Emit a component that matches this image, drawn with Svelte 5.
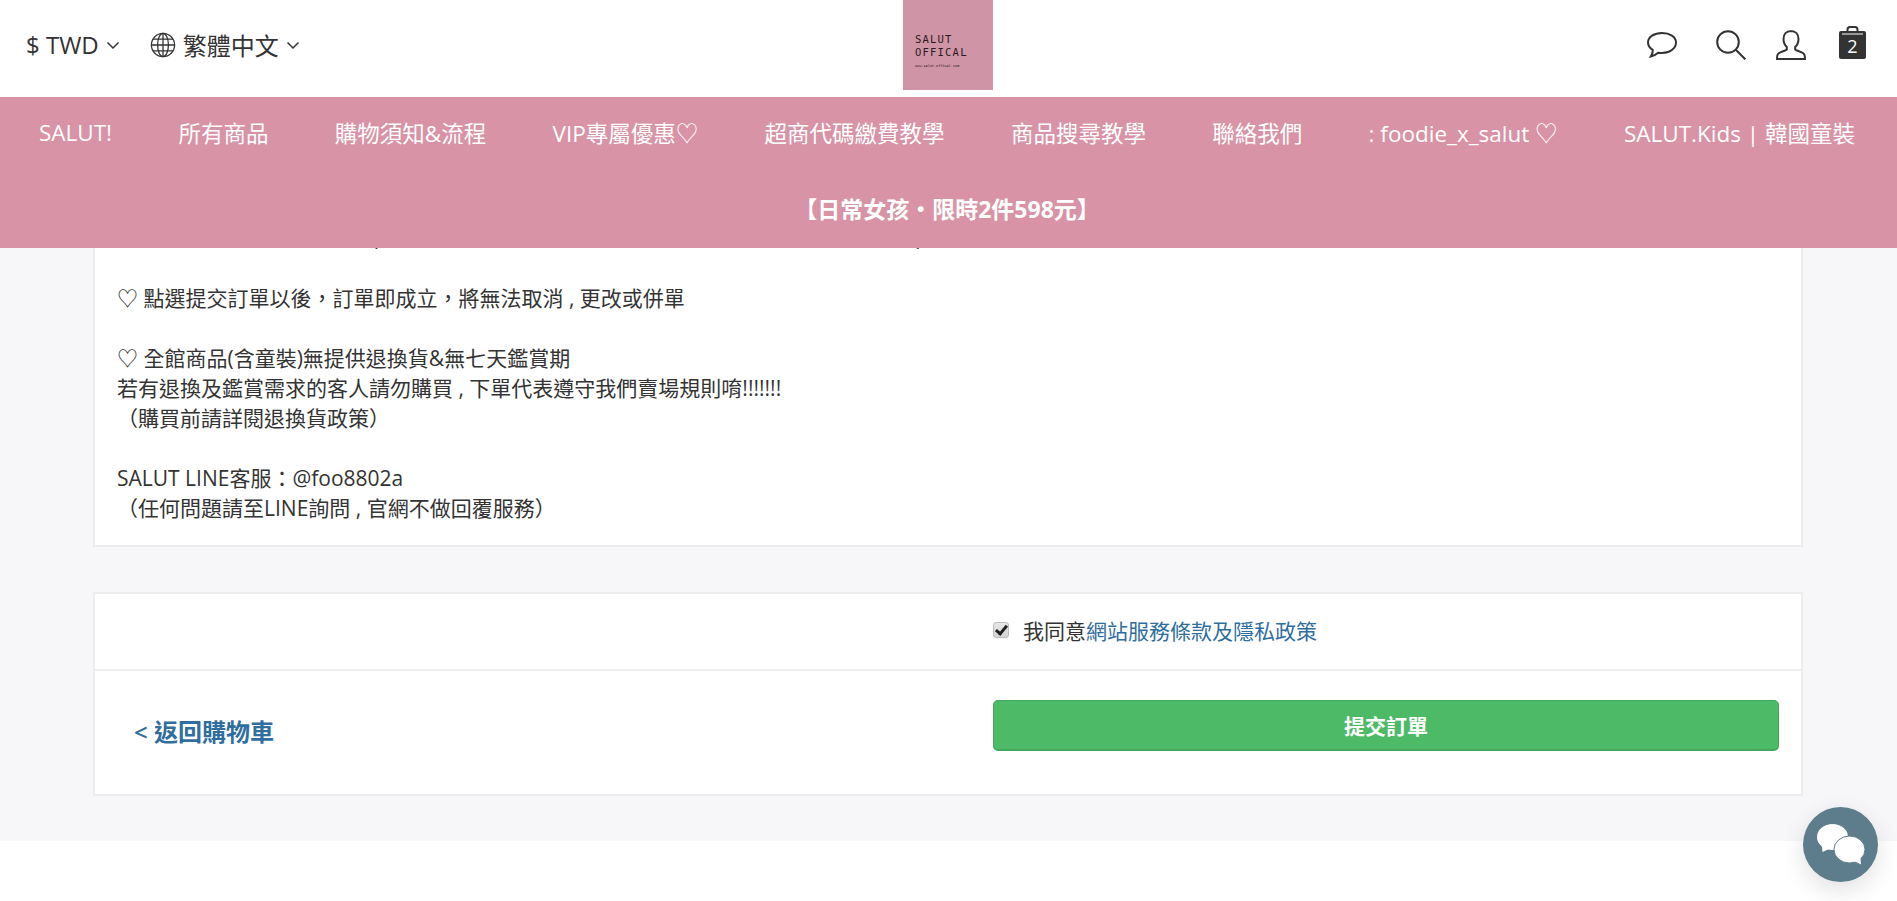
<script>
	const navItems = [
		'SALUT!',
		'所有商品',
		'購物須知&流程',
		'VIP專屬優惠♡',
		'超商代碼繳費教學',
		'商品搜尋教學',
		'聯絡我們',
		': foodie_x_salut ♡',
		'SALUT.Kids | 韓國童裝'
	];
</script>

<div class="page">
	<header class="site-header">
		<div class="topbar">
			<div class="topbar__left">
				<span class="picker">$ TWD
					<svg class="chev" viewBox="0 0 14 9"><path d="M1.5 1.5 7 7l5.5-5.5" /></svg>
				</span>
				<span class="picker">
					<svg class="globe" viewBox="0 0 26 26">
						<circle cx="13" cy="13" r="11.6" />
						<ellipse cx="13" cy="13" rx="5.4" ry="11.6" />
						<path d="M13 1.4v23.2M1.4 13h23.2M3 7.2h20M3 18.8h20" />
					</svg>
					繁體中文
					<svg class="chev" viewBox="0 0 14 9"><path d="M1.5 1.5 7 7l5.5-5.5" /></svg>
				</span>
			</div>
			<div class="logo">
				<span class="logo__name">SALUT<br />OFFICAL</span>
				<span class="logo__url">www.salut-offical.com</span>
			</div>
			<div class="topbar__right">
				<svg class="icon icon--chat" viewBox="0 0 30 26">
					<path d="M15 1C7.3 1 1 5 1 10.5c0 3 1.9 5.6 4.7 7.3.2 2.5-.6 4.9-1.9 6.7 2.800-.6 5.500-2 7.400-3.700 1.200.2 2.500.3 3.800.3 7.700 0 14-4.700 14-10.600S22.700 1 15 1Z" />
				</svg>
				<svg class="icon icon--search" viewBox="0 0 30 30">
					<circle cx="12" cy="12" r="10.8" />
					<path d="m19.8 19.8 9.6 9.6" />
				</svg>
				<svg class="icon icon--user" viewBox="0 0 30 30">
					<path d="M15 1c-4.600 0-7.500 3.300-7.500 8 0 3.400 1.300 6.100 3.300 8v2.500c-1.500 1.300-5.800 2.200-8.100 3.800C1.400 24.200 1 25.800 1 29h28c0-3.200-.4-4.800-1.700-5.700-2.300-1.600-6.600-2.500-8.100-3.800V17c2-1.900 3.300-4.600 3.300-8 0-4.700-2.900-8-7.500-8Z" />
				</svg>
				<svg class="cart" viewBox="0 0 27 33">
					<path class="cart__handle" d="M8.500 6V3.500C8.500 1.800 9.500 1 11 1h5c1.500 0 2.500.8 2.500 2.500V6" />
					<rect y="5" width="27" height="28" rx="2" />
					<path class="cart__line" d="M3 8h21" />
					<text x="13.500" y="27">2</text>
				</svg>
			</div>
		</div>
		<nav class="nav">
			<div class="nav__row">
				{#each navItems as item}
					<span>{item}</span>
				{/each}
			</div>
			<div class="nav__row nav__row--promo">
				<span>【日常女孩・限時2件598元】</span>
			</div>
		</nav>
	</header>

	<main class="content">
		<section class="panel panel--notes">
			<p class="notes__hidden"><span>(</span><span>)</span></p>
			<p>&nbsp;</p>
			<p>♡ 點選提交訂單以後，訂單即成立，將無法取消 , 更改或併單</p>
			<p>&nbsp;</p>
			<p>♡ 全館商品(含童裝)無提供退換貨&amp;無七天鑑賞期</p>
			<p>若有退換及鑑賞需求的客人請勿購買 , 下單代表遵守我們賣場規則唷!!!!!!!</p>
			<p>（購買前請詳閱退換貨政策）</p>
			<p>&nbsp;</p>
			<p>SALUT LINE客服：@foo8802a</p>
			<p>（任何問題請至LINE詢問 , 官網不做回覆服務）</p>
		</section>

		<section class="panel panel--submit">
			<div class="agree">
				<div class="agree__col">
					<input type="checkbox" checked />
					<span>我同意<a href="#terms">網站服務條款及隱私政策</a></span>
				</div>
			</div>
			<div class="actions">
				<a class="back" href="#cart">&lt; 返回購物車</a>
				<button class="submit" type="button">提交訂單</button>
			</div>
		</section>
	</main>

	<button class="chat" type="button" aria-label="chat">
		<svg viewBox="0 0 75 75">
			<ellipse cx="29.5" cy="30" rx="15.5" ry="13" />
			<path d="m19 39 .5 6 6.500-3Z" />
			<ellipse class="chat__front" cx="46.5" cy="42.5" rx="15.5" ry="13.5" />
			<path d="m51 54 7 3.500-.5-6.500Z" />
		</svg>
	</button>
</div>

<style>
	:global(body) {
		margin: 0;
		background: #fff;
		font-family: 'Open Sans', 'Noto Sans CJK TC', sans-serif;
		color: #333;
	}

	.page {
		position: relative;
		height: 901px;
		overflow: hidden;
	}

	.site-header {
		position: absolute;
		top: 0;
		left: 0;
		right: 0;
		z-index: 2;
	}

	.topbar {
		position: relative;
		display: flex;
		align-items: flex-start;
		justify-content: space-between;
		height: 97px;
		padding: 0 31px 0 26px;
		background: #fff;
	}

	.topbar__left {
		display: flex;
		align-items: center;
		gap: 30px;
		height: 89px;
		font-size: 24px;
		color: #333;
	}

	.picker {
		display: flex;
		align-items: center;
		gap: 7px;
	}

	.chev {
		width: 14px;
		height: 9px;
		margin-top: 2px;
		fill: none;
		stroke: #333;
		stroke-width: 1.5;
	}

	.globe {
		width: 26px;
		height: 26px;
		fill: none;
		stroke: #333;
		stroke-width: 1.3;
	}

	.logo {
		position: absolute;
		left: 903px;
		top: 0;
		width: 90px;
		height: 90px;
		box-sizing: border-box;
		padding: 33px 0 0 12px;
		background: #cf94a6;
		color: #2a1a20;
		font-family: 'DejaVu Sans Mono', monospace;
	}

	.logo__name {
		display: block;
		font-size: 10.5px;
		line-height: 12.5px;
		letter-spacing: 1.2px;
	}

	.logo__url {
		display: block;
		margin-top: 5px;
		font-size: 3.5px;
		line-height: 6px;
		white-space: nowrap;
	}

	.topbar__right {
		display: flex;
		align-items: center;
		height: 89px;
	}

	.icon {
		display: block;
		fill: none;
		stroke: #333;
		stroke-width: 2;
	}

	.icon--chat {
		width: 30px;
		height: 26px;
	}

	.icon--search {
		width: 30px;
		height: 30px;
		margin-left: 39px;
	}

	.icon--user {
		width: 30px;
		height: 30px;
		margin-left: 30px;
	}

	.cart {
		display: block;
		width: 27px;
		height: 33px;
		margin-left: 33px;
		margin-bottom: 4px;
		fill: #333;
	}

	.cart__handle {
		fill: none;
		stroke: #333;
		stroke-width: 2;
	}

	.cart__line {
		stroke: #fff;
		stroke-width: 1;
	}

	.cart text {
		fill: #fff;
		font-size: 18px;
		text-anchor: middle;
	}

	.nav {
		height: 151px;
		background: #d893a6;
		color: #fff;
		font-size: 22.5px;
	}

	.nav__row {
		display: flex;
		justify-content: space-between;
		align-items: center;
		height: 71px;
		padding: 0 42px 0 39px;
	}

	.nav__row--promo {
		justify-content: center;
		height: 80px;
		font-size: 23px;
		font-weight: 700;
	}

	.content {
		height: 596px;
		padding: 200px 93px 45px;
		background: #f7f7f9;
	}

	.panel {
		width: 1710px;
		box-sizing: border-box;
		background: #fff;
		border: 2px solid #ededed;
		border-top: 0;
	}

	.panel--notes {
		padding: 23px 22px 22px;
		font-size: 21px;
		line-height: 30px;
	}

	.panel--notes p {
		margin: 0;
	}

	/* the line scrolled under the nav, only its brackets still show */
	.notes__hidden {
		position: relative;
		height: 30px;
	}

	.notes__hidden span {
		position: absolute;
		left: 255px;
		top: 0;
	}

	.notes__hidden span + span {
		left: 799px;
	}

	.panel--submit {
		margin-top: 45px;
		border-top: 2px solid #ededed;
	}

	.agree {
		display: flex;
		align-items: center;
		height: 75px;
		border-bottom: 2px solid #ededed;
		font-size: 21px;
	}

	.agree__col {
		display: flex;
		align-items: center;
		gap: 14px;
		margin: 0 0 3px 898px;
	}

	.agree__col input {
		appearance: none;
		position: relative;
		width: 16px;
		height: 16px;
		margin: 0;
		box-sizing: border-box;
		background: linear-gradient(#e8e8e8, #d4d4d4);
		border: 1px solid #bdbdbd;
		border-radius: 3px;
	}

	.agree__col input::after {
		content: '';
		position: absolute;
		left: 4px;
		top: 0;
		width: 4px;
		height: 9px;
		border: solid #222;
		border-width: 0 3px 3px 0;
		transform: rotate(40deg);
	}

	a {
		color: #2f6e9e;
		text-decoration: none;
	}

	.actions {
		display: flex;
		align-items: flex-start;
		height: 123px;
	}

	.back {
		width: 859px;
		margin: 44px 0 0 39px;
		font-size: 24px;
		font-weight: 600;
		line-height: 34px;
	}

	.submit {
		width: 786px;
		height: 51px;
		margin-top: 29px;
		background: #4cba67;
		border: 1px solid #43a85c;
		border-bottom-width: 2px;
		border-radius: 5px;
		color: #fff;
		font: 600 21px 'Open Sans', 'Noto Sans CJK TC', sans-serif;
	}

	.chat {
		position: absolute;
		left: 1803px;
		top: 807px;
		z-index: 3;
		width: 75px;
		height: 75px;
		padding: 0;
		border: 0;
		border-radius: 50%;
		background: #5e7d8c;
		box-shadow: 0 8px 24px rgb(0 0 0 / 0.12);
	}

	.chat svg {
		display: block;
		width: 75px;
		height: 75px;
		fill: #fff;
	}

	.chat__front {
		stroke: #5e7d8c;
		stroke-width: 1;
	}
</style>
